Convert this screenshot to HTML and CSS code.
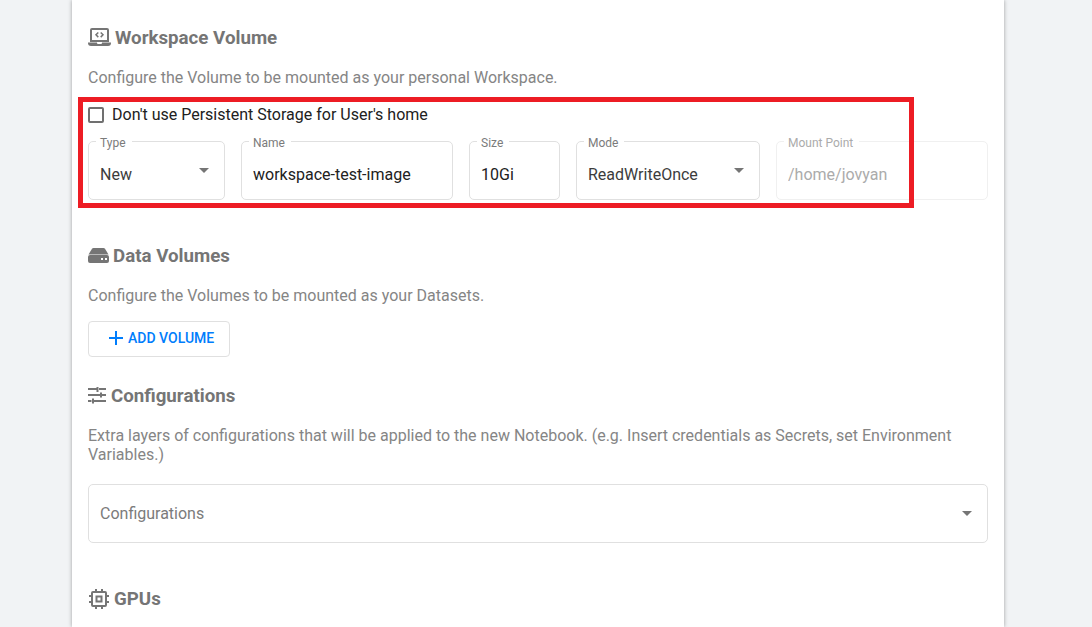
FILE: index.html
```html
<!DOCTYPE html>
<html lang="en">
<head>
<meta charset="utf-8">
<title>New Notebook</title>
<link rel="stylesheet" href="styles.css">
</head>
<body>
<main class="card">
  <section class="section workspace">
    <h3 class="heading">
      <svg class="icon" width="23" height="20" viewBox="0 0 23 20" fill="currentColor" aria-hidden="true"><path fill-rule="evenodd" d="M4 0h15q2 0 2 2v12H2V2Q2 0 4 0zM4 2v10h15V2z"/><path d="M0 14.500h23v.5q0 3-3 3H3q-3 0-3-3z"/><path fill="#fff" d="M9 14h5v1q0 1-1 1h-3q-1 0-1-1z"/><path fill="none" stroke="currentColor" stroke-width="1.500" d="M10.300 4.500L8 6.800l2.300 2.300M12.700 4.500L15 6.800l-2.300 2.300"/></svg>
      Workspace Volume
    </h3>
    <p class="text">Configure the Volume to be mounted as your personal Workspace.</p>
    <div class="highlighted">
      <label class="check"><input type="checkbox">Don't use Persistent Storage for User's home</label>
      <div class="fields">
        <div class="field"><label for="type">Type</label><select id="type"><option>New</option><option>Existing</option></select></div>
        <div class="field"><label for="name">Name</label><input id="name" type="text" value="workspace-test-image"></div>
        <div class="field"><label for="size">Size</label><input id="size" type="text" value="10Gi"></div>
        <div class="field"><label for="mode">Mode</label><select id="mode"><option>ReadWriteOnce</option><option>ReadWriteMany</option></select></div>
        <div class="field disabled"><label for="mount">Mount Point</label><input id="mount" type="text" value="/home/jovyan" disabled></div>
      </div>
    </div>
  </section>

  <section class="section volumes">
    <h3 class="heading">
      <svg class="icon" width="21" height="20" viewBox="0 0 21 20" fill="currentColor" aria-hidden="true"><path d="M5.500 2h10q1 0 1.500.8L20.500 8.500H.5L4 2.800Q4.500 2 5.500 2z"/><path fill-rule="evenodd" d="M2 9h17q2 0 2 2v4q0 2-2 2H2q-2 0-2-2v-4q0-2 2-2zM13 12v2h2v-2zM17 12v2h2v-2z"/></svg>
      Data Volumes
    </h3>
    <p class="text">Configure the Volumes to be mounted as your Datasets.</p>
    <button class="add" type="button">
      <svg width="14" height="14" viewBox="0 0 14 14" fill="currentColor" aria-hidden="true"><path d="M6 0h2v6h6v2H8v6H6V8H0V6h6z"/></svg>
      ADD VOLUME
    </button>
  </section>

  <section class="section configurations">
    <h3 class="heading">
      <svg class="icon" width="19" height="20" viewBox="0 0 19 20" fill="currentColor" aria-hidden="true"><path d="M0 2h8.500V1h2v5h-2V4H0zM11 2h7v2h-7zM0 8h12V6.500h2V8h4v2h-4v1.500h-2V10H0zM0 14h3.500v2H0zM4 12.500h2V14h12v2H6v1.500H4z"/></svg>
      Configurations
    </h3>
    <p class="text">Extra layers of configurations that will be applied to the new Notebook. (e.g. Insert credentials as Secrets, set Environment Variables.)</p>
    <div class="field empty"><select id="configurations" aria-label="Configurations"><option>Configurations</option></select></div>
  </section>

  <section class="section gpus">
    <h3 class="heading">
      <svg class="icon" width="22" height="22" viewBox="0 0 22 22" fill="none" stroke="currentColor" stroke-width="2" aria-hidden="true"><rect x="4" y="4" width="14" height="14" rx="1"/><rect x="8.500" y="8.500" width="5" height="5"/><path d="M8 1v3M14 1v3M8 18v3M14 18v3M1 8h3M1 14h3M18 8h3M18 14h3"/></svg>
      GPUs
    </h3>
  </section>
</main>
</body>
</html>
```
FILE: styles.css
```css
* {
  box-sizing: border-box;
}

body {
  margin: 0;
  background: #f1f3f5;
  color: #212121;
  font: 16px/19px Roboto, sans-serif;
}

.card {
  min-height: 100vh;
  margin: 0 88px 0 72px;
  padding: 26px 16px 16px;
  background: #fff;
  box-shadow: 0 0 4px rgba(0, 0, 0, 0.35);
}

.section + .section {
  margin-top: 44px;
}

.section.configurations {
  margin-top: 27px;
}

.heading {
  display: flex;
  align-items: center;
  gap: 4px;
  margin: 0;
  color: #757575;
  line-height: 24px;
}

.icon {
  flex: none;
}

.text {
  margin: 18px 0 16px;
  color: #858585;
}

.highlighted {
  position: relative;
}

.highlighted::after {
  content: "";
  position: absolute;
  inset: -6px 74px -8px -10px;
  border: 5px solid #ed1c24;
  pointer-events: none;
}

.check {
  display: flex;
  align-items: center;
  gap: 8px;
  padding: 2px 0 17px;
}

.check input {
  appearance: none;
  width: 16px;
  height: 16px;
  margin: 0;
  border: 2px solid #707070;
  border-radius: 2px;
}

.check input:checked {
  background: #007dfc;
}

.fields {
  display: grid;
  grid-template-columns: 137fr 212fr 91fr 184fr 212fr;
  gap: 16px;
}

.field {
  position: relative;
  min-width: 0;
  border: 1px solid #e0e0e0;
  border-radius: 5px;
}

.field label {
  position: absolute;
  top: -8px;
  left: 7px;
  padding: 0 6px 0 4px;
  background: #fff;
  color: #7b7b7b;
  font-size: 12px;
  line-height: 18px;
}

.field input,
.field select {
  display: block;
  width: 100%;
  height: 57px;
  margin: 0;
  padding: 8px 11px 0;
  appearance: none;
  border: 0;
  background: transparent;
  color: #212121;
  font: inherit;
}

.field select {
  color: #3c3c3c;
}

.field:has(select)::after {
  content: "";
  position: absolute;
  top: 26px;
  right: 15px;
  border: 5px solid transparent;
  border-top-color: #757575;
  border-bottom: 0;
  pointer-events: none;
}

.field.disabled {
  border-color: #f0f0f0;
}

.field.disabled label,
.field.disabled input {
  color: #ababab;
}

.field.empty {
  margin-top: 20px;
}

.field.empty select {
  padding-top: 0;
  color: #7b7b7b;
}

.add {
  display: flex;
  align-items: center;
  gap: 5px;
  height: 36px;
  padding: 0 15px 2px 20px;
  border: 1px solid #e0e0e0;
  border-radius: 4px;
  background: #fff;
  color: #007dfc;
  font: 500 14px/20px Roboto, sans-serif;
}
```
